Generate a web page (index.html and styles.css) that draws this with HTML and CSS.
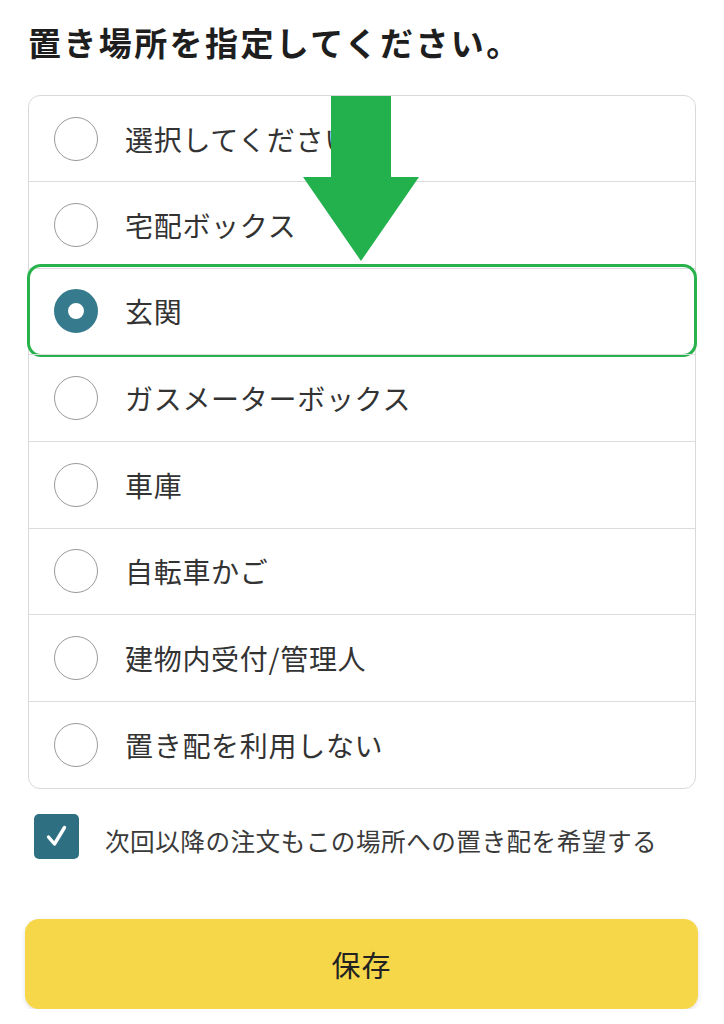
FILE: index.html
```html
<!DOCTYPE html>
<html lang="ja">
<head>
<meta charset="utf-8">
<link rel="stylesheet" href="styles.css">
</head>
<body>
<div class="page">
  <h1 class="title">置き場所を指定してください。</h1>
  <div class="list">
    <div class="row"><span class="radio"></span><span class="label">選択してください</span></div>
    <div class="row"><span class="radio"></span><span class="label">宅配ボックス</span></div>
    <div class="row selected"><span class="radio on"></span><span class="label">玄関</span><span class="highlight"></span></div>
    <div class="row"><span class="radio"></span><span class="label">ガスメーターボックス</span></div>
    <div class="row"><span class="radio"></span><span class="label">車庫</span></div>
    <div class="row"><span class="radio"></span><span class="label">自転車かご</span></div>
    <div class="row"><span class="radio"></span><span class="label">建物内受付/管理人</span></div>
    <div class="row"><span class="radio"></span><span class="label">置き配を利用しない</span></div>
    <svg class="arrow" width="118" height="167" viewBox="0 0 118 167"><polygon points="28,0 88,0 88,81 116,81 58,165 0,81 28,81" fill="#23b14d"/></svg>
  </div>
  <div class="check-row">
    <span class="checkbox"><svg width="45" height="45" viewBox="0 0 45 45"><path d="M14.5 23 L20.5 30 L30.5 13.5" fill="none" stroke="#fff" stroke-width="3.4" stroke-linecap="round" stroke-linejoin="round"/></svg></span>
    <span class="check-label">次回以降の注文もこの場所への置き配を希望する</span>
  </div>
  <button class="save">保存</button>
</div>
</body>
</html>
```
FILE: styles.css
```css
html, body {
  margin: 0;
  padding: 0;
  background: #fff;
}
body {
  font-family: "Noto Sans CJK JP", "Noto Sans", sans-serif;
  color: #333;
}
.page {
  padding: 0 26px 0 25px;
}
.title {
  margin: 0 0 0 3px;
  padding-top: 19px;
  font-size: 33px;
  line-height: 46px;
  font-weight: 700;
  color: #1e1e1e;
  letter-spacing: 2.4px;
}
.list {
  position: relative;
  margin: 30px 2px 0 3px;
  border: 1.5px solid #d9d9d9;
  border-radius: 12px;
}
.row {
  position: relative;
  display: flex;
  align-items: center;
  height: 86.67px;
  box-sizing: border-box;
  border-top: 1.5px solid #dcdcdc;
}
.row:first-child {
  border-top: none;
  height: 85px;
}
.radio {
  width: 44px;
  height: 44px;
  box-sizing: border-box;
  border: 1.6px solid #9a9a9a;
  border-radius: 50%;
  margin-left: 25px;
  flex: none;
}
.radio.on {
  border: 14px solid #357b8d;
  background: #fff;
}
.label {
  margin-left: 27px;
  font-size: 28px;
  letter-spacing: 0.7px;
  color: #333;
  line-height: 40px;
}
.highlight {
  position: absolute;
  left: -2px;
  right: -1.5px;
  top: -4.5px;
  bottom: -3px;
  border: 3px solid #27b24c;
  border-radius: 14px;
  pointer-events: none;
}
.arrow {
  position: absolute;
  left: 274px;
  top: 0px;
}
.check-row {
  display: flex;
  align-items: center;
  margin-top: 25px;
  margin-left: 9px;
}
.checkbox {
  width: 45px;
  height: 45px;
  border-radius: 5px;
  background: #2e7082;
  flex: none;
  display: block;
}
.checkbox svg {
  display: block;
}
.check-label {
  margin-left: 26px;
  margin-top: 8px;
  font-size: 24.6px;
  letter-spacing: 0.5px;
  color: #3a3a3a;
  line-height: 34px;
}
.save {
  display: block;
  width: 100%;
  height: 90px;
  margin-top: 60px;
  border: none;
  border-radius: 14px;
  background: #f7d74a;
  box-shadow: 0 2px 5px rgba(0,0,0,0.12);
  font-family: "Noto Sans CJK JP", "Noto Sans", sans-serif;
  font-size: 29px;
  letter-spacing: 1px;
  color: #222;
  padding: 0;
}
```
